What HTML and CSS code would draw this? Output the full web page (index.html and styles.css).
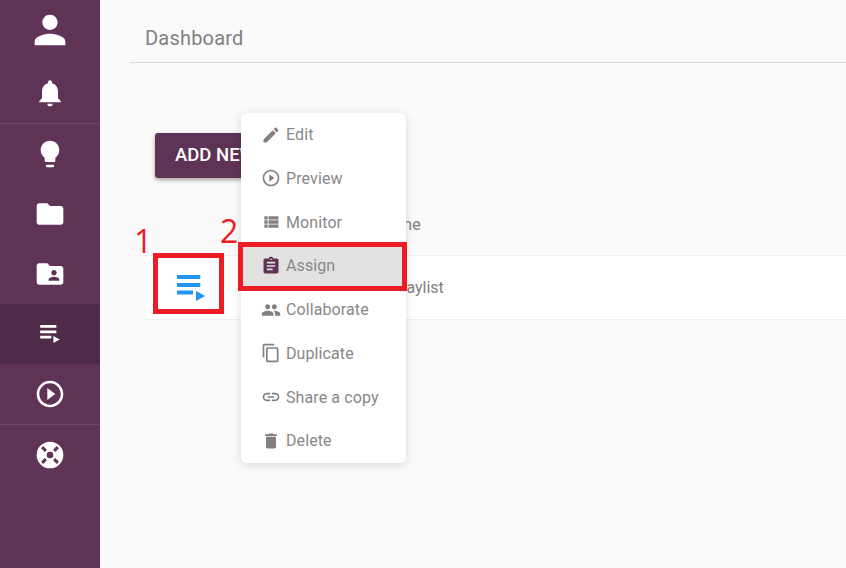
FILE: index.html
```html
<!DOCTYPE html>
<html lang="en">
<head>
<meta charset="utf-8">
<title>Dashboard</title>
<link rel="stylesheet" href="styles.css">
</head>
<body>
<svg class="defs" width="0" height="0" aria-hidden="true">
  <symbol id="i-playlist" viewBox="0 0 28.3 26">
    <path d="M0 0h23.3v4H0zM0 8h23.3v4H0zM0 15.5h16v4H0zM19 16v10l9.3-5z"/>
  </symbol>
</svg>
<div class="app">
  <nav class="sidebar">
    <div class="group first">
      <a class="nav-item"><svg class="ico person" viewBox="0 0 24 24"><path d="M12 12c2.21 0 4-1.79 4-4s-1.79-4-4-4-4 1.79-4 4 1.79 4 4 4zm0 2c-2.67 0-8 1.34-8 4v2h16v-2c0-2.66-5.33-4-8-4z"/></svg></a>
      <a class="nav-item bell"><svg class="ico" viewBox="0 0 24 24"><path d="M12 22c1.1 0 2-.9 2-2h-4c0 1.1.89 2 2 2zm6-6v-5c0-3.07-1.64-5.64-4.5-6.32V4c0-.83-.67-1.5-1.5-1.5s-1.5.67-1.5 1.5v.68C7.63 5.36 6 7.92 6 11v5l-2 2v1h16v-1l-2-2z"/></svg></a>
    </div>
    <div class="group">
      <a class="nav-item"><svg class="ico" viewBox="0 0 24 24"><path d="M9 21c0 .55.45 1 1 1h4c.55 0 1-.45 1-1v-1H9v1zm3-19C8.14 2 5 5.14 5 9c0 2.38 1.19 4.47 3 5.74V17c0 .55.45 1 1 1h6c.55 0 1-.45 1-1v-2.26c1.81-1.27 3-3.36 3-5.74 0-3.86-3.14-7-7-7z"/></svg></a>
      <a class="nav-item"><svg class="ico" viewBox="0 0 24 24"><path d="M10 4H4c-1.1 0-1.99.9-1.99 2L2 18c0 1.1.9 2 2 2h16c1.1 0 2-.9 2-2V8c0-1.1-.9-2-2-2h-8l-2-2z"/></svg></a>
      <a class="nav-item"><svg class="ico" viewBox="0 0 24 24"><path d="M20 6h-8l-2-2H4c-1.1 0-1.99.9-1.99 2L2 18c0 1.1.9 2 2 2h16c1.1 0 2-.9 2-2V8c0-1.1-.9-2-2-2zm-5 3c1.1 0 2 .9 2 2s-.9 2-2 2-2-.9-2-2 .9-2 2-2zm4 8h-8v-1c0-1.33 2.67-2 4-2s4 .67 4 2v1z"/></svg></a>
      <a class="nav-item active"><svg class="ico-playlist"><use href="#i-playlist"/></svg></a>
      <a class="nav-item"><svg class="ico" viewBox="0 0 24 24"><path d="M10 16.5l6-4.5-6-4.5v9zM12 2C6.48 2 2 6.48 2 12s4.48 10 10 10 10-4.48 10-10S17.52 2 12 2zm0 18c-4.41 0-8-3.59-8-8s3.59-8 8-8 8 3.59 8 8-3.59 8-8 8z"/></svg></a>
    </div>
    <div class="group">
      <a class="nav-item"><svg class="ico" viewBox="0 0 24 24"><path fill-rule="evenodd" d="M12 2a10 10 0 1 0 0 20 10 10 0 0 0 0-20zm0 7.5a2.5 2.5 0 1 1 0 5 2.5 2.5 0 0 1 0-5zM6.9 5.3 9.7 8.1 8.1 9.7 5.3 6.9zM17.1 5.3 18.7 6.9 15.9 9.7 14.3 8.1zM6.9 18.7 5.3 17.1 8.1 14.3 9.7 15.9zM17.1 18.7 14.3 15.9 15.9 14.3 18.7 17.1z"/></svg></a>
    </div>
  </nav>
  <main class="content">
    <header class="page-header"><h1 class="page-title">Dashboard</h1></header>
    <div class="toolbar"><button class="add-btn">ADD NEW</button></div>
    <div class="table-head"><span class="col-name">Name</span></div>
    <div class="table-row">
      <div class="row-icon"><svg class="ico-playlist big"><use href="#i-playlist"/></svg></div>
      <span class="row-name">My playlist</span>
    </div>
    <ul class="menu">
      <li class="menu-item"><svg class="mi" viewBox="0 0 24 24"><path d="M3 17.25V21h3.75L17.81 9.94l-3.75-3.75L3 17.25zM20.71 7.04c.39-.39.39-1.02 0-1.41l-2.34-2.34c-.39-.39-1.02-.39-1.41 0l-1.83 1.83 3.75 3.75 1.83-1.83z"/></svg>Edit</li>
      <li class="menu-item"><svg class="mi" viewBox="0 0 24 24"><path d="M10 16.5l6-4.5-6-4.5v9zM12 2C6.48 2 2 6.48 2 12s4.48 10 10 10 10-4.48 10-10S17.52 2 12 2zm0 18c-4.41 0-8-3.59-8-8s3.59-8 8-8 8 3.59 8 8-3.59 8-8 8z"/></svg>Preview</li>
      <li class="menu-item"><svg class="mi" viewBox="0 0 24 24"><path d="M4 14h4v-4H4v4zm0 5h4v-4H4v4zM4 9h4V5H4v4zm5 5h12v-4H9v4zm0 5h12v-4H9v4zM9 5v4h12V5H9z"/></svg>Monitor</li>
      <li class="menu-item selected"><svg class="mi plum" viewBox="0 0 24 24"><path d="M19 3h-4.18C14.4 1.84 13.3 1 12 1c-1.3 0-2.4.84-2.82 2H5c-1.1 0-2 .9-2 2v14c0 1.1.9 2 2 2h14c1.1 0 2-.9 2-2V5c0-1.1-.9-2-2-2zm-7 0c.55 0 1 .45 1 1s-.45 1-1 1-1-.45-1-1 .45-1 1-1zm2 14H7v-2h7v2zm3-4H7v-2h10v2zm0-4H7V7h10v2z"/></svg>Assign</li>
      <li class="menu-item"><svg class="mi" viewBox="0 0 24 24"><path d="M16 11c1.66 0 2.99-1.34 2.99-3S17.66 5 16 5c-1.66 0-3 1.34-3 3s1.34 3 3 3zm-8 0c1.66 0 2.99-1.34 2.99-3S9.66 5 8 5C6.34 5 5 6.34 5 8s1.34 3 3 3zm0 2c-2.33 0-7 1.17-7 3.5V19h14v-2.5c0-2.33-4.67-3.5-7-3.5zm8 0c-.29 0-.62.02-.97.05 1.16.84 1.97 1.97 1.97 3.45V19h6v-2.5c0-2.33-4.67-3.5-7-3.5z"/></svg>Collaborate</li>
      <li class="menu-item"><svg class="mi" viewBox="0 0 24 24"><path d="M16 1H4c-1.1 0-2 .9-2 2v14h2V3h12V1zm3 4H8c-1.1 0-2 .9-2 2v14c0 1.1.9 2 2 2h11c1.1 0 2-.9 2-2V7c0-1.1-.9-2-2-2zm0 16H8V7h11v14z"/></svg>Duplicate</li>
      <li class="menu-item"><svg class="mi" viewBox="0 0 24 24"><path d="M3.9 12c0-1.71 1.39-3.1 3.1-3.1h4V7H7c-2.76 0-5 2.24-5 5s2.24 5 5 5h4v-1.9H7c-1.71 0-3.1-1.39-3.1-3.1zM8 13h8v-2H8v2zm9-6h-4v1.9h4c1.71 0 3.1 1.39 3.1 3.1s-1.39 3.1-3.1 3.1h-4V17h4c2.76 0 5-2.24 5-5s-2.24-5-5-5z"/></svg>Share a copy</li>
      <li class="menu-item"><svg class="mi" viewBox="0 0 24 24"><path d="M6 19c0 1.1.9 2 2 2h8c1.1 0 2-.9 2-2V7H6v12zM19 4h-3.5l-1-1h-5l-1 1H5v2h14V4z"/></svg>Delete</li>
    </ul>
    <div class="callout box-one"></div>
    <div class="callout box-two"></div>
    <span class="num num-one">1</span>
    <span class="num num-two">2</span>
  </main>
</div>
</body>
</html>
```
FILE: styles.css
```css
html, body {
  margin: 0;
  height: 100%;
  overflow: hidden;
  background: #fafafa;
  font-family: Roboto, "Liberation Sans", sans-serif;
}
.defs { position: absolute; }
.app { display: flex; height: 568px; }
.sidebar {
  width: 100px;
  flex: none;
  background: #5e3356;
}
.group { border-bottom: 1px solid #6e4667; }
.group:last-child { border-bottom: 0; }
.nav-item {
  display: flex;
  align-items: center;
  justify-content: center;
  height: 60px;
}
.bell { margin-top: 3px; }
.active { background: #4f2b49; }
.ico { width: 32px; height: 32px; fill: #fff; }
.person { width: 46px; height: 46px; }
.ico-playlist { width: 20px; height: 18px; fill: #fff; }
.ico-playlist.big { width: 28.3px; height: 26px; fill: #2196f3; }

.content { position: relative; flex: 1; min-width: 0; padding-left: 30px; }
.page-header {
  height: 63px;
  border-bottom: 1px solid #d8d8d8;
  display: flex;
  align-items: center;
  padding-left: 15px;
  padding-top: 13px;
  box-sizing: border-box;
}
.page-title { margin: 0; font-size: 20px; font-weight: 400; color: #808080; letter-spacing: .2px; }
.toolbar { padding: 70px 0 0 25px; }
.add-btn {
  display: block;
  width: 130px;
  height: 45px;
  border: 0;
  border-radius: 3px;
  background: #5e3356;
  color: #fff;
  font: 500 18.5px Roboto, sans-serif;
  text-align: left;
  white-space: nowrap;
  padding: 0 20px 2px;
  box-shadow: 0 2px 4px rgba(0,0,0,.35);
}
.table-head {
  height: 77px;
  box-sizing: border-box;
  padding: 35px 0 0 248px;
  font-size: 16px;
  color: #808080;
}
.col-name { line-height: 24px; }
.table-row {
  margin-left: 15px;
  height: 65px;
  box-sizing: border-box;
  background: #fff;
  border-top: 1px solid #eee;
  border-bottom: 1px solid #eee;
  display: flex;
  align-items: center;
}
.row-icon { width: 86px; flex: none; display: flex; justify-content: center; padding-left: 7px; box-sizing: border-box; }
.row-name { margin-left: 137px; font-size: 16px; color: #808080; }

.menu {
  position: absolute;
  left: 141px;
  top: 113px;
  width: 165px;
  height: 350px;
  margin: 0;
  padding: 0;
  list-style: none;
  background: #fff;
  border-radius: 5px;
  box-shadow: 0 2px 10px rgba(0,0,0,.14);
  display: flex;
  flex-direction: column;
}
.menu-item {
  flex: 1;
  display: flex;
  align-items: center;
  padding: 0 0 .6px 20px;
  gap: 5px;
  font-size: 16px;
  letter-spacing: .1px;
  color: #888;
}
.selected { background: #e2e2e2; }
.mi { width: 20px; height: 20px; fill: #808080; flex: none; }
.plum { fill: #5e3356; }

.callout { position: absolute; box-sizing: border-box; border: 5px solid #ed1c24; }
.box-one { left: 53px; top: 253px; width: 71px; height: 61px; }
.box-two { left: 138px; top: 242px; width: 169px; height: 49px; }
.num {
  position: absolute;
  font-family: "Open Sans", sans-serif;
  font-weight: 400;
  font-size: 32px;
  line-height: 33px;
  color: #ed1c24;
}
.num-one { left: 34px; top: 224px; }
.num-two { left: 120px; top: 214px; }
```
